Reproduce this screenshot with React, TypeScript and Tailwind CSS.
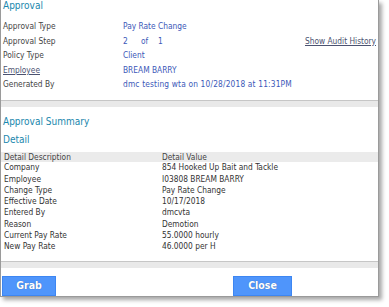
const rows: { label: string; value: React.ReactNode; link?: boolean; wide?: boolean }[] = [
  { label: 'Approval Type', value: 'Pay Rate Change' },
  {
    label: 'Approval Step',
    value: (
      <span className="flex">
        <span className="w-[18px]">2</span>
        <span className="w-[17px]">of</span>
        <span>1</span>
      </span>
    ),
  },
  { label: 'Policy Type', value: 'Client' },
  { label: 'Employee', value: 'BREAM BARRY', link: true },
  { label: 'Generated By', value: 'dmc testing wta on 10/28/2018 at 11:31PM', wide: true },
]

const details: [string, string][] = [
  ['Company', '854 Hooked Up Bait and Tackle'],
  ['Employee', 'I03808 BREAM BARRY'],
  ['Change Type', 'Pay Rate Change'],
  ['Effective Date', '10/17/2018'],
  ['Entered By', 'dmcvta'],
  ['Reason', 'Demotion'],
  ['Current Pay Rate', '55.0000 hourly'],
  ['New Pay Rate', '46.0000 per H'],
]

function Band() {
  return <div className="h-[7px] shrink-0 border-t border-[#c6c6c6] bg-[#e9e9e9]" />
}

function Button({ children, className }: { children: React.ReactNode; className?: string }) {
  return (
    <button
      type="button"
      className={
        'flex h-[20px] items-center justify-center border border-[#3d86f2] bg-[#4f95fb] text-[10.5px] font-bold text-white [text-shadow:0_0_1px_rgba(0,0,0,0.35)] ' +
        (className ?? '')
      }
    >
      {children}
    </button>
  )
}

export default function App() {
  return (
    <div className="h-[307px] w-[389px] bg-white font-['DejaVu_Sans_Condensed','Liberation_Sans',sans-serif]">
      <div className="flex h-[297px] w-[379px] flex-col border-x border-b border-[#9a9a9a] bg-white shadow-[3px_3px_4px_rgba(0,0,0,0.35)]">
        {/* approval header */}
        <section className="h-[100px] shrink-0 px-[2px]">
          <h2 className="h-[11px] text-[10px] leading-[11px] text-[#1a87ad]">Approval</h2>
          <div className="relative mt-[8.5px] text-[8.3px]">
            {rows.map((r) => (
              <div key={r.label} className="flex h-[14.4px] items-center">
                <span
                  className={
                    r.link
                      ? 'w-[120px] text-[#4b5270] underline'
                      : 'w-[120px] text-[#454545]'
                  }
                >
                  {r.label}
                </span>
                <span className={r.wide ? 'tracking-[0.17px] text-[#3b58b8]' : 'text-[#3b58b8]'}>
                  {r.value}
                </span>
              </div>
            ))}
            <a className="absolute right-0 top-[14.4px] flex h-[14.4px] items-center text-[#4b5270] underline">
              Show Audit History
            </a>
          </div>
        </section>

        <Band />

        {/* summary */}
        <section className="flex-1">
          <h2 className="mt-[8px] h-[13px] px-[2px] text-[10px] leading-[13px] text-[#1a87ad]">
            Approval Summary
          </h2>
          <h3 className="mt-[5px] h-[13px] px-[2px] text-[10px] leading-[13px] text-[#1a87ad]">
            Detail
          </h3>
          <div className="mt-[6px] text-[8.3px] text-[#333]">
            <div className="flex h-[10px] items-center bg-[#ebebeb] text-[#444]">
              <span className="w-[161px] pl-[3px]">Detail Description</span>
              <span>Detail Value</span>
            </div>
            {details.map(([k, v]) => (
              <div key={k} className="flex h-[11.25px] items-center">
                <span className="w-[161px] pl-[3px]">{k}</span>
                <span>{v}</span>
              </div>
            ))}
          </div>
        </section>

        <Band />

        <footer className="flex h-[28px] shrink-0 items-end">
          <Button className="ml-[1px] w-[54px]">Grab</Button>
          <Button className="ml-[177px] w-[59px]">Close</Button>
        </footer>
      </div>
    </div>
  )
}
